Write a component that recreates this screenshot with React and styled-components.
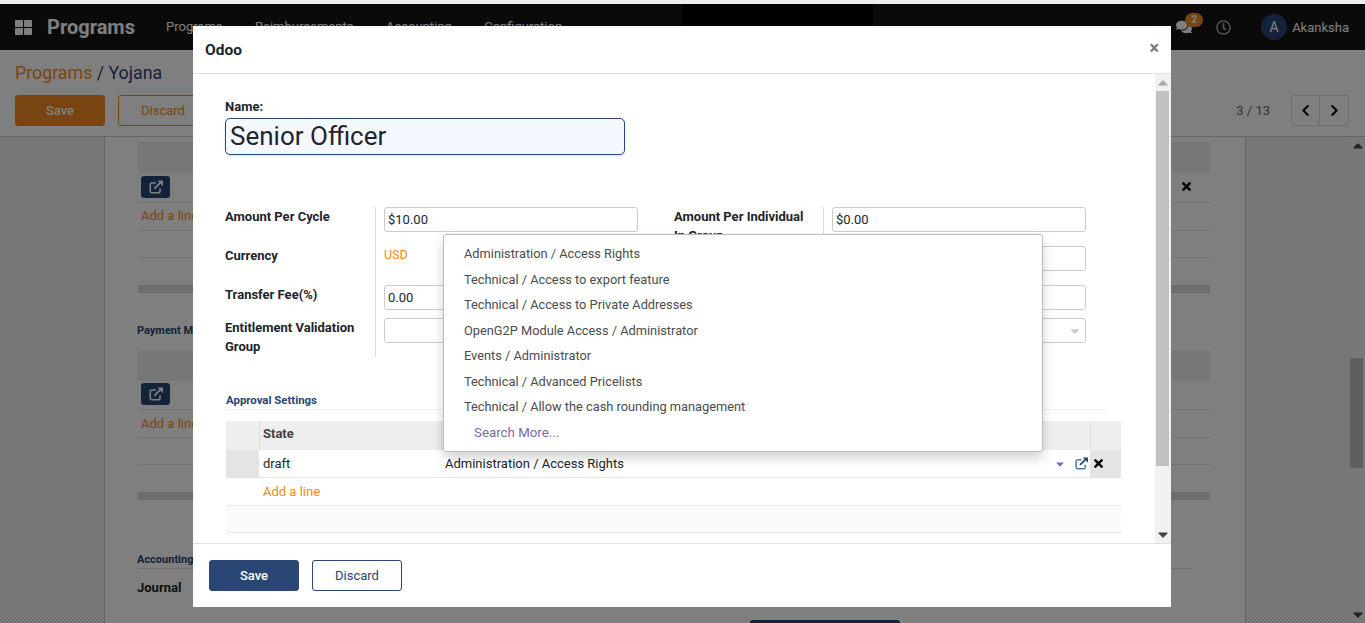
import React from "react";
import styled, { createGlobalStyle } from "styled-components";
import { FaThLarge, FaComments, FaRegClock, FaChevronLeft, FaChevronRight, FaTimes, FaCaretUp, FaCaretDown } from "react-icons/fa";

const navy = "#2a4675";
const orange = "#f08a24";

const GlobalStyle = createGlobalStyle`
  html, body { margin: 0; padding: 0; height: 100%; overflow: hidden; background: #efefef; }
  body { font-family: Roboto, "Liberation Sans", sans-serif; font-size: 13px; color: #212529; }
  * { box-sizing: border-box; }
`;

const TopStrip = styled.div`
  height: 4px;
  background: #efefef;
`;

const AppFrame = styled.div`
  position: relative;
  height: 619px;
  overflow: hidden;
  display: flex;
  flex-direction: column;
  background: #fff;
`;

const NavBar = styled.header`
  height: 46px;
  flex: none;
  background: #141414;
  display: flex;
  align-items: center;
  padding: 0 16px 0 15px;
  color: #fff;
  position: relative;
`;

const AppIcon = styled(FaThLarge)`
  width: 17px;
  height: 17px;
  margin-right: 15px;
`;

const Brand = styled.div`
  font-size: 20px;
  font-weight: 700;
  width: 119px;
`;

const NavItem = styled.div`
  font-size: 13px;
  margin-right: 32.5px;
  margin-top: -1px;
`;

const Redaction = styled.div`
  position: absolute;
  left: 682px;
  top: 0;
  width: 191px;
  height: 22px;
  background: #000;
  z-index: 5;
`;

const NavRight = styled.div`
  margin-left: auto;
  display: flex;
  align-items: center;
`;

const ChatBox = styled.div`
  position: relative;
  width: 40px;
  height: 20px;
  display: flex;
  align-items: center;
  font-size: 16px;
`;

const Badge = styled.span`
  position: absolute;
  left: 9px;
  top: -4px;
  width: 18px;
  height: 14px;
  border-radius: 7px;
  background: ${orange};
  font-size: 10px;
  font-weight: 700;
  line-height: 14px;
  text-align: center;
`;

const ClockIcon = styled(FaRegClock)`
  width: 15px;
  height: 15px;
  margin-right: 30px;
  color: #aaa;
`;

const Avatar = styled.div`
  width: 26px;
  height: 26px;
  border-radius: 50%;
  background: ${navy};
  font-size: 14px;
  line-height: 26px;
  text-align: center;
  margin-right: 5px;
`;

const UserName = styled.span`
  font-size: 13px;
`;

const ControlPanel = styled.div`
  height: 87px;
  flex: none;
  background: #fff;
  border-bottom: 1px solid #ccc;
  padding: 12px 16px 0 15px;
`;

const Breadcrumb = styled.div`
  font-size: 17.8px;
  line-height: 22px;
  color: ${navy};
  & > a { color: ${orange}; }
`;

const PanelRow = styled.div`
  display: flex;
  align-items: center;
  margin-top: 11px;
  gap: 13px;
`;

const Button = styled.button`
  width: 90px;
  height: 31px;
  border-radius: 3px;
  font-family: inherit;
  font-size: 13px;
  padding: 0;
  border: 1px solid ${(p) => p.$color};
  background: ${(p) => (p.$solid ? p.$color : "#fff")};
  color: ${(p) => (p.$solid ? "#fff" : p.$color)};
  font-weight: ${(p) => (p.$solid ? 500 : 400)};
`;

const Pager = styled.div`
  margin-left: auto;
  display: flex;
  align-items: center;
`;

const PagerText = styled.span`
  color: #5f6b7a;
  font-size: 13px;
  margin-right: 21px;
`;

const PagerButton = styled.div`
  width: 29px;
  height: 31px;
  border: 1px solid #ddd;
  border-left-width: ${(p) => (p.$last ? 0 : "1px")};
  border-radius: ${(p) => (p.$last ? "0 3px 3px 0" : "3px 0 0 3px")};
  display: flex;
  align-items: center;
  justify-content: center;
  color: #000;
  font-size: 13px;
`;

const ContentRow = styled.div`
  flex: 1;
  min-height: 0;
  display: flex;
`;

const SidePad = styled.div`
  flex: ${(p) => (p.$grow ? "1" : "none")};
  width: ${(p) => (p.$grow ? "auto" : "105px")};
  background: repeating-conic-gradient(#e6e6e6 0 25%, #f4f4f4 0 50%) 0 0 / 4px 4px;
  border-right: ${(p) => (p.$grow ? 0 : "1px solid #ccc")};
  border-left: ${(p) => (p.$grow ? "1px solid #ccc" : 0)};
`;

const Sheet = styled.main`
  width: 1140px;
  flex: none;
  background: #fff;
  padding: 5px 35px 0 33px;
`;

const SheetHead = styled.div`
  height: 31px;
  background: #eee;
`;

const SheetRow = styled.div`
  height: ${(p) => p.$h}px;
  border-bottom: 1px solid #e4e4e4;
  display: flex;
  align-items: center;
  justify-content: space-between;
  padding: 0 17px 0 3px;
  padding-bottom: ${(p) => p.$nudge || 0}px;
`;

const LinkButton = styled.div`
  width: 29px;
  height: 22px;
  border-radius: 3px;
  background: ${navy};
  color: #fff;
  display: flex;
  align-items: center;
  justify-content: center;
`;

const AddLine = styled.a`
  color: ${orange};
  font-size: 13px;
`;

const SheetBar = styled.div`
  height: 8px;
  margin-top: 27px;
  background: #ddd;
`;

const SheetHeading = styled.div`
  font-size: 11px;
  font-weight: 700;
  color: ${navy};
  margin: ${(p) => p.$mt}px 0 ${(p) => p.$mb}px -1px;
`;

const JournalRow = styled.div`
  display: flex;
  border-top: 1px solid #ddd;
  margin: 0 17px 0 -1px;
  padding-top: 11px;
  font-weight: 700;
`;

const JournalButton = styled.div`
  margin: 25px 0 0 612px;
  width: 150px;
  height: 20px;
  background: ${navy};
  border-radius: 3px;
`;

const PageScroll = styled.div`
  width: 15px;
  flex: none;
  background: #f1f1f1;
  display: flex;
  flex-direction: column;
  align-items: center;
  color: #444;
  font-size: 12px;
`;

const PageThumb = styled.div`
  width: 13px;
  height: 110px;
  margin: 204px 2px auto 0;
  background: #bfbfbf;
`;

const Backdrop = styled.div`
  position: absolute;
  inset: 0;
  background: rgba(0, 0, 0, 0.5);
  z-index: 8;
`;

const Modal = styled.section`
  position: absolute;
  left: 193px;
  top: 22px;
  width: 978px;
  height: 581px;
  background: #fff;
  z-index: 10;
  display: flex;
  flex-direction: column;
`;

const ModalHeader = styled.div`
  height: 48px;
  flex: none;
  border-bottom: 1px solid #dee2e6;
  display: flex;
  align-items: center;
  justify-content: space-between;
  padding: 0 12px 0 12px;
`;

const ModalTitle = styled.h4`
  margin: 0;
  font-size: 15.5px;
  font-weight: 700;
`;

const CloseMark = styled.span`
  color: #777;
  font-size: 18px;
  font-weight: 700;
  margin-top: -4px;
`;

const ModalBody = styled.div`
  flex: 1;
  min-height: 0;
  display: flex;
`;

const FormArea = styled.div`
  flex: 1;
  min-width: 0;
  padding: 25px 50px 0 32px;
`;

const NameLabel = styled.label`
  display: block;
  font-size: 13px;
  font-weight: 700;
  line-height: 16px;
`;

const NameInput = styled.div`
  width: 400px;
  height: 37px;
  border: 1px solid ${navy};
  border-radius: 5px;
  background: #f5f8ff;
  font-size: 26px;
  line-height: 34px;
  padding-left: 4px;
  margin-top: 3px;
  box-shadow: 0 1px 3px rgba(0, 0, 0, 0.12);
`;

const FormColumns = styled.div`
  display: flex;
  gap: 36px;
  margin-top: 52px;
`;

const FormColumn = styled.div`
  display: grid;
  grid-template-columns: ${(p) => p.$label}px 263px;
  grid-template-rows: 39px 39px 33px 39px;
`;

const FieldLabel = styled.div`
  font-size: 13px;
  font-weight: 700;
  line-height: 19px;
  padding-right: 10px;
`;

const FieldValue = styled.div`
  border-left: 1px solid #ddd;
  padding-left: 8px;
`;

const TextField = styled.div`
  position: relative;
  width: 254px;
  height: 25px;
  border: 1px solid #ccc;
  border-radius: 3px;
  padding-left: 3px;
  font-size: 13px;
  line-height: 23px;
`;

const FieldCaret = styled(FaCaretDown)`
  position: absolute;
  right: 3px;
  top: 5px;
  color: #ccc;
  font-size: 14px;
`;

const CurrencyText = styled.span`
  display: block;
  color: ${orange};
  font-size: 12.5px;
  line-height: 18px;
`;

const SectionTitle = styled.div`
  width: 879px;
  margin: 34px 0 11px 1px;
  font-size: 11.4px;
  font-weight: 700;
  line-height: 18px;
  color: ${navy};
  border-bottom: 1px solid #eee;
`;

const Lines = styled.div`
  width: 895px;
  margin-left: 1px;
  display: grid;
  grid-template-columns: 33px 182px 1fr 31px;
  grid-template-rows: 29px 28px 28px 27px;
`;

const HeadCell = styled.div`
  background: #eee;
  border-left: ${(p) => (p.$plain ? 0 : "1px solid #ddd")};
  font-weight: 700;
  font-size: 13px;
  color: #444;
  padding: 5px 3px;
`;

const SideCell = styled.div`
  background: #e4e4e4;
  border-bottom: 1px solid #e4e4e4;
  display: flex;
  align-items: center;
  padding-left: 2px;
  color: #000;
`;

const BodyCell = styled.div`
  border-bottom: 1px solid #e4e4e4;
  padding: 0 4px;
  display: flex;
  align-items: center;
  font-size: 13px;
`;

const RelationCell = styled(BodyCell)`
  justify-content: space-between;
  padding-right: 2px;
`;

const RelationTools = styled.span`
  display: flex;
  align-items: center;
  gap: 9px;
  color: ${navy};
`;

const ToolCaret = styled(FaCaretDown)`
  color: #7a68a6;
  font-size: 12px;
`;

const AddCell = styled.div`
  grid-column: 1 / -1;
  border-bottom: 1px solid #e8e8e8;
  padding-left: 37px;
  display: flex;
  align-items: center;
`;

const BlankCell = styled.div`
  grid-column: 1 / -1;
  background: #fbfafa;
  border-bottom: 1px solid #e8e8e8;
`;

const ModalScroll = styled.div`
  width: 16px;
  flex: none;
  background: #f1f1f1;
  display: flex;
  flex-direction: column;
  align-items: center;
  padding-right: 1px;
  font-size: 12px;
  color: #444;
`;

const ModalThumb = styled.div`
  width: 13px;
  height: 375px;
  background: #c1c1c1;
  margin-bottom: auto;
`;

const ArrowUp = styled(FaCaretUp)`
  width: 10px;
  height: 17px;
  flex: none;
  color: ${(p) => p.$color || "#444"};
`;

const ArrowDown = styled(FaCaretDown)`
  width: 10px;
  height: 17px;
  flex: none;
  color: #444;
`;

const ModalFooter = styled.div`
  height: 64px;
  flex: none;
  border-top: 1px solid #dee2e6;
  display: flex;
  align-items: center;
  gap: 13px;
  padding: 0 16px;
`;

const Dropdown = styled.ul`
  position: absolute;
  left: 250px;
  top: 208px;
  width: 600px;
  height: 218px;
  margin: 0;
  padding: 6px 0 0;
  list-style: none;
  background: #fff;
  border: 1px solid #bbb;
  border-radius: 3px;
  box-shadow: 0 6px 12px rgba(0, 0, 0, 0.18);
  z-index: 12;
`;

const DropItem = styled.li`
  height: 25.5px;
  line-height: 25.5px;
  padding-left: ${(p) => (p.$more ? 30 : 20)}px;
  font-size: ${(p) => (p.$more ? 13.3 : 12.8)}px;
  color: ${(p) => (p.$more ? "#7a6aa5" : "#4c4c4c")};
`;

const ExternalLink = ({ size = 14, color = "currentColor", arrow = "currentColor" }) => (
  <svg width={size} height={size} viewBox="0 0 16 16" fill="none" stroke={color} strokeWidth="1.8">
    <path d="M12.6 9.5v3a2 2 0 0 1-2 2H3.4a2 2 0 0 1-2-2V5.4a2 2 0 0 1 2-2H8" />
    <path d="M6.2 9.8 13 3" stroke={arrow} strokeWidth="2.2" />
    <path d="M9.5.5H16v6.5z" fill={arrow} stroke="none" />
  </svg>
);

const options = [
  "Administration / Access Rights",
  "Technical / Access to export feature",
  "Technical / Access to Private Addresses",
  "OpenG2P Module Access / Administrator",
  "Events / Administrator",
  "Technical / Advanced Pricelists",
  "Technical / Allow the cash rounding management",
];

export default function App() {
  return (
    <>
      <GlobalStyle />
      <TopStrip />
      <AppFrame>
        <NavBar>
          <AppIcon />
          <Brand>Programs</Brand>
          <NavItem>Programs</NavItem>
          <NavItem>Reimbursements</NavItem>
          <NavItem>Accounting</NavItem>
          <NavItem>Configuration</NavItem>
          <Redaction />
          <NavRight>
            <ChatBox>
              <FaComments />
              <Badge>2</Badge>
            </ChatBox>
            <ClockIcon />
            <Avatar>A</Avatar>
            <UserName>Akanksha</UserName>
          </NavRight>
        </NavBar>
        <ControlPanel>
          <Breadcrumb>
            <a>Programs</a> / Yojana
          </Breadcrumb>
          <PanelRow>
            <Button $solid $color={orange}>Save</Button>
            <Button $color={orange}>Discard</Button>
            <Pager>
              <PagerText>3 / 13</PagerText>
              <PagerButton><FaChevronLeft /></PagerButton>
              <PagerButton $last><FaChevronRight /></PagerButton>
            </Pager>
          </PanelRow>
        </ControlPanel>
        <ContentRow>
          <SidePad />
          <Sheet>
            <SheetHead />
            <SheetRow $h={30} $nudge={2}>
              <LinkButton><ExternalLink /></LinkButton>
              <FaTimes color="#000" size={13} />
            </SheetRow>
            <SheetRow $h={28} $nudge={2}><AddLine>Add a line</AddLine></SheetRow>
            <SheetRow $h={27} />
            <SheetBar />
            <SheetHeading $mt={31} $mb={13}>Payment Manager</SheetHeading>
            <SheetHead />
            <SheetRow $h={29} $nudge={2}>
              <LinkButton><ExternalLink /></LinkButton>
            </SheetRow>
            <SheetRow $h={28}><AddLine>Add a line</AddLine></SheetRow>
            <SheetRow $h={27} />
            <SheetBar />
            <SheetHeading $mt={53} $mb={2}>Accounting</SheetHeading>
            <JournalRow>Journal</JournalRow>
            <JournalButton />
          </Sheet>
          <SidePad $grow />
          <PageScroll>
            <ArrowUp />
            <PageThumb />
            <ArrowDown />
          </PageScroll>
        </ContentRow>
        <Backdrop />
        <Modal>
          <ModalHeader>
            <ModalTitle>Odoo</ModalTitle>
            <CloseMark>×</CloseMark>
          </ModalHeader>
          <ModalBody>
            <FormArea>
              <NameLabel>Name:</NameLabel>
              <NameInput>Senior Officer</NameInput>
              <FormColumns>
                <FormColumn $label={150}>
                  <FieldLabel>Amount Per Cycle</FieldLabel>
                  <FieldValue><TextField>$10.00</TextField></FieldValue>
                  <FieldLabel>Currency</FieldLabel>
                  <FieldValue><CurrencyText>USD</CurrencyText></FieldValue>
                  <FieldLabel>Transfer Fee(%)</FieldLabel>
                  <FieldValue><TextField>0.00</TextField></FieldValue>
                  <FieldLabel>Entitlement Validation Group</FieldLabel>
                  <FieldValue><TextField /></FieldValue>
                </FormColumn>
                <FormColumn $label={149}>
                  <FieldLabel>Amount Per Individual In Group</FieldLabel>
                  <FieldValue><TextField>$0.00</TextField></FieldValue>
                  <FieldLabel />
                  <FieldValue><TextField /></FieldValue>
                  <FieldLabel />
                  <FieldValue><TextField /></FieldValue>
                  <FieldLabel />
                  <FieldValue><TextField><FieldCaret /></TextField></FieldValue>
                </FormColumn>
              </FormColumns>
              <SectionTitle>Approval Settings</SectionTitle>
              <Lines>
                <HeadCell $plain />
                <HeadCell>State</HeadCell>
                <HeadCell />
                <HeadCell />
                <SideCell />
                <BodyCell>draft</BodyCell>
                <RelationCell>
                  Administration / Access Rights
                  <RelationTools>
                    <ToolCaret />
                    <ExternalLink size={13} color="#4a78b5" arrow={navy} />
                  </RelationTools>
                </RelationCell>
                <SideCell><FaTimes size={13} /></SideCell>
                <AddCell><AddLine>Add a line</AddLine></AddCell>
                <BlankCell />
              </Lines>
            </FormArea>
            <ModalScroll>
              <ArrowUp $color="#aaa" />
              <ModalThumb />
              <ArrowDown />
            </ModalScroll>
          </ModalBody>
          <ModalFooter>
            <Button $solid $color={navy}>Save</Button>
            <Button $color={navy}>Discard</Button>
          </ModalFooter>
          <Dropdown>
            {options.map((o) => (
              <DropItem key={o}>{o}</DropItem>
            ))}
            <DropItem $more>Search More...</DropItem>
          </Dropdown>
        </Modal>
      </AppFrame>
    </>
  );
}
